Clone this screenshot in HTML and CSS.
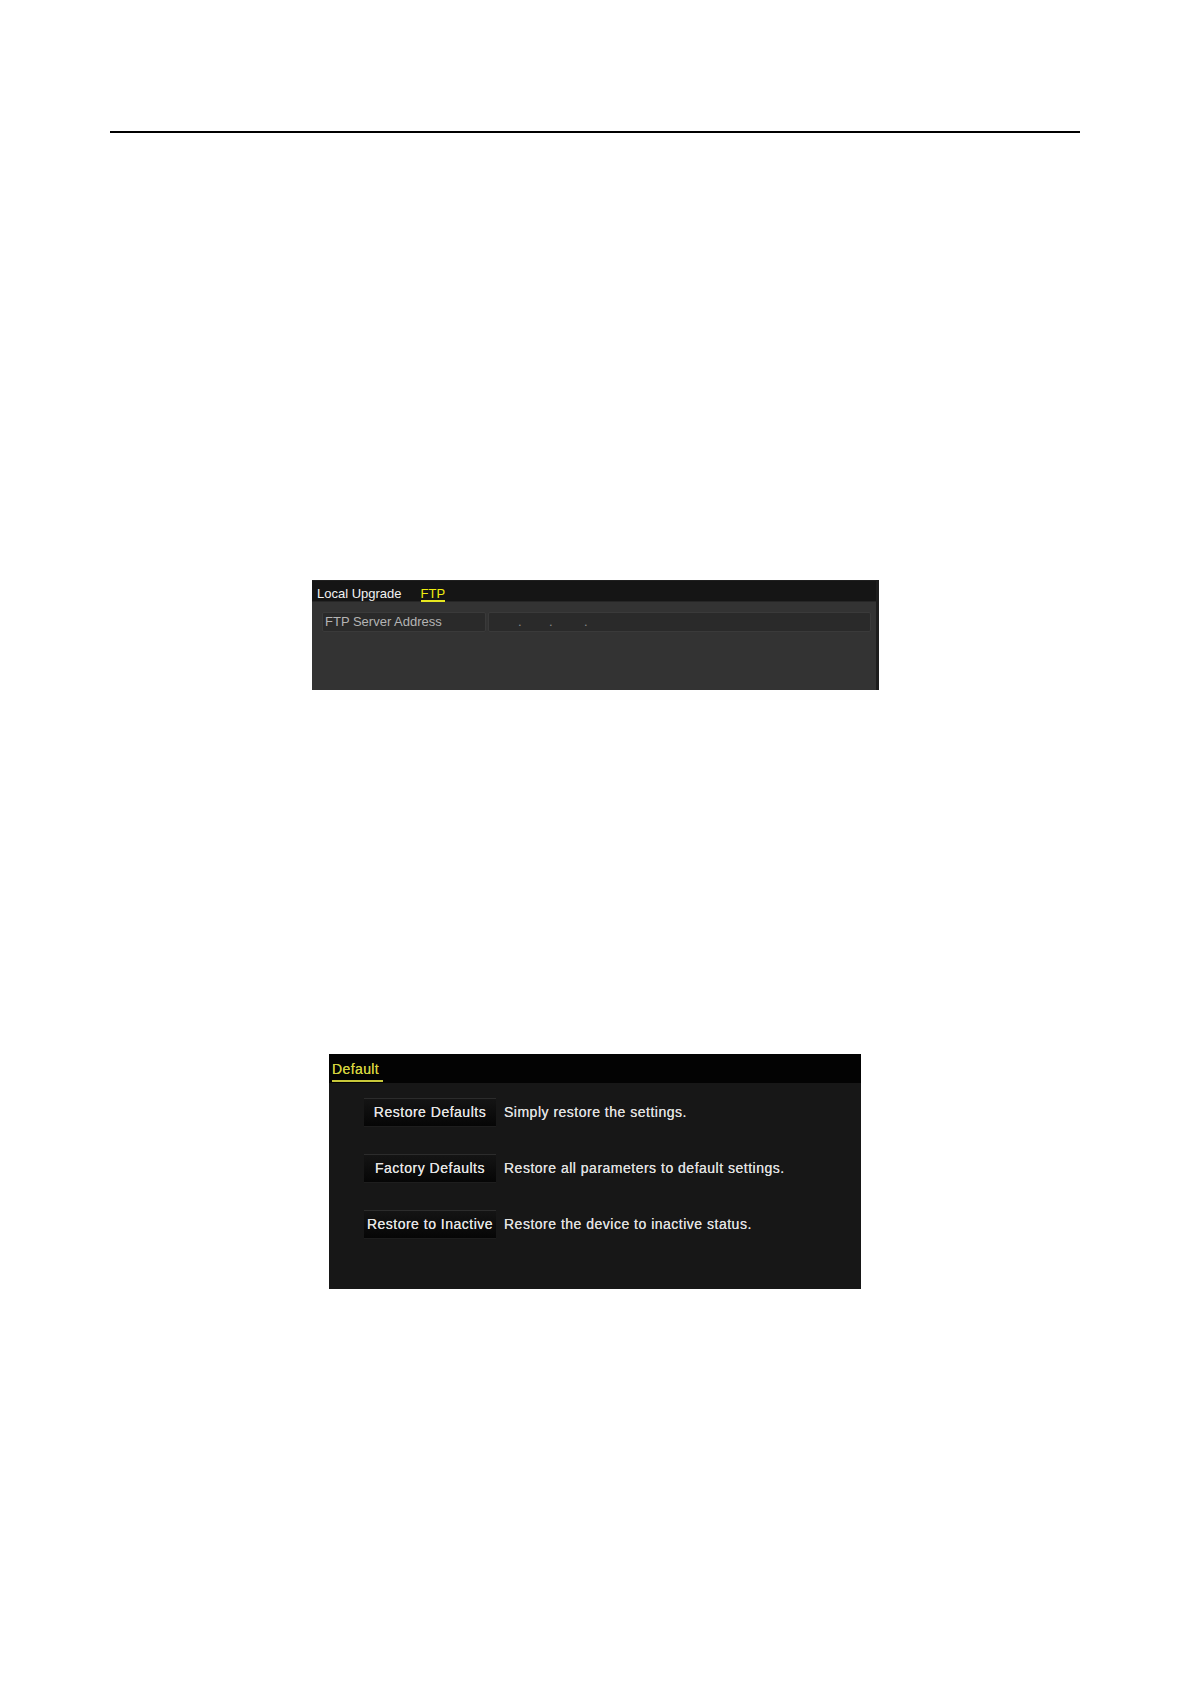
FILE: index.html
```html
<!DOCTYPE html>
<html lang="en">
<head>
<meta charset="utf-8">
<title>Upgrade and Default</title>
<link rel="stylesheet" href="styles.css">
</head>
<body>
<div class="page">
  <hr class="rule">

  <section class="panel ftp">
    <div class="ftp-tabs">
      <span class="ftp-tab">Local Upgrade</span>
      <span class="ftp-tab active">FTP</span>
    </div>
    <div class="ftp-body">
      <div class="field">
        <div class="field-label">FTP Server Address</div>
        <div class="field-value">
          <span class="dot d1">.</span><span class="dot d2">.</span><span class="dot">.</span>
        </div>
      </div>
    </div>
  </section>

  <section class="panel defaults">
    <div class="def-header">
      <span class="def-tab">Default</span>
    </div>
    <div class="def-body">
      <div class="def-row">
        <div class="def-btn">Restore Defaults</div>
        <div class="def-desc">Simply restore the settings.</div>
      </div>
      <div class="def-row">
        <div class="def-btn">Factory Defaults</div>
        <div class="def-desc">Restore all parameters to default settings.</div>
      </div>
      <div class="def-row">
        <div class="def-btn">Restore to Inactive</div>
        <div class="def-desc">Restore the device to inactive status.</div>
      </div>
    </div>
  </section>
</div>
</body>
</html>
```

FILE: styles.css
```css
html, body {
  margin: 0;
  padding: 0;
  background: #ffffff;
}

body {
  font-family: "Liberation Sans", Arial, sans-serif;
}

.page {
  box-sizing: border-box;
  height: 1684px;
  padding-top: 131px;
}

.rule {
  margin: 0 0 0 110px;
  width: 970px;
  height: 0;
  border: 0;
  border-top: 2px solid #000000;
}

/* ---------- FTP panel ---------- */
.ftp {
  box-sizing: border-box;
  margin: 447px 0 0 312px;
  width: 567px;
  height: 110px;
  background: #333333;
  border-right: 3px solid #1d1d1d;
}

.ftp-tabs {
  box-sizing: border-box;
  display: flex;
  gap: 19px;
  height: 22px;
  padding: 6px 0 0 5px;
  background: #151515;
  border-top: 1px solid #202020;
  border-bottom: 1px solid #262626;
}

.ftp-tab {
  display: block;
  font-size: 13px;
  line-height: 13px;
  color: #f2f2f2;
  border-bottom: 2px solid transparent;
  height: 13px;
}

.ftp-tab.active {
  color: #eeee10;
  border-bottom-color: #e8e820;
}

.ftp-body {
  padding: 10px 5px 0 10px;
}

.field {
  display: flex;
  gap: 2px;
  height: 20px;
}

.field-label,
.field-value {
  box-sizing: border-box;
  height: 20px;
  background: #2a2a2a;
  border: 1px solid #3a3a3a;
  border-radius: 2px;
  font-size: 13px;
  line-height: 18px;
}

.field-label {
  width: 164px;
  padding-left: 2px;
  color: #b4b4b4;
}

.field-value {
  flex: 1;
  padding-left: 29px;
  color: #8a8a8a;
  display: flex;
}

.dot {
  display: inline-block;
}

.dot.d1 { width: 31px; }
.dot.d2 { width: 35px; }

/* ---------- Default panel ---------- */
.defaults {
  box-sizing: border-box;
  margin: 364px 0 0 329px;
  width: 532px;
  height: 235px;
  background: #171717;
}

.def-header {
  box-sizing: border-box;
  display: flex;
  align-items: flex-start;
  height: 29px;
  padding: 7px 0 0 3px;
  background: #030303;
}

.def-tab {
  display: block;
  font-size: 14px;
  line-height: 16px;
  letter-spacing: 0.4px;
  color: #d2d23e;
  text-shadow: 0 0 0.4px #d2d23e;
  padding: 0 4px 3px 0;
  border-bottom: 2px solid #c8c83a;
}

.def-body {
  display: flex;
  flex-direction: column;
  gap: 28px;
  padding: 15px 0 0 35px;
}

.def-row {
  display: flex;
  align-items: center;
  gap: 8px;
  height: 28px;
}

.def-btn {
  box-sizing: border-box;
  width: 132px;
  height: 28px;
  background: linear-gradient(#141414, #060606);
  border-top: 1px solid #2c2c2c;
  box-shadow: 0 1px 0 #1e1e1e;
  color: #e4e4e4;
  font-size: 14px;
  letter-spacing: 0.5px;
  text-shadow: 0 0 0.6px #e4e4e4;
  line-height: 26px;
  text-align: center;
  white-space: nowrap;
}

.def-desc {
  color: #e0e0e0;
  font-size: 14px;
  letter-spacing: 0.5px;
  text-shadow: 0 0 0.6px #e0e0e0;
  white-space: nowrap;
}
```
